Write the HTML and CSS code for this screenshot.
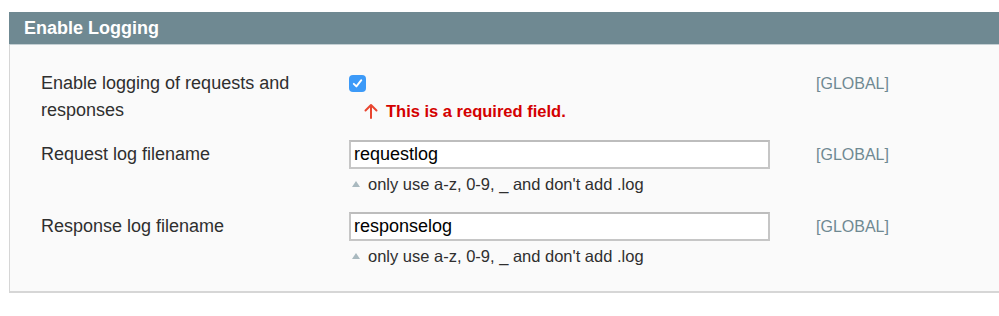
FILE: index.html
```html
<!doctype html>
<html lang="en">

<head>
    <meta charset="utf-8">
    <title>Enable Logging</title>
    <link rel="stylesheet" href="styles.css">
</head>

<body>
<div id="section">
    <div class="section-head">Enable Logging</div>
    <div class="fieldset">
        <div class="row row-first">
            <div class="label label-wrap">Enable logging of requests and responses</div>
            <div class="value">
                <span class="checkbox">
                    <svg width="11" height="11" viewBox="0 0 11 11"><path d="M1.8 5.8 L4.4 8.4 L9.3 2.2" fill="none" stroke="#fff" stroke-width="1.9" stroke-linecap="round" stroke-linejoin="round"/></svg>
                </span>
                <div class="required">
                    <svg class="arrow" width="14" height="16" viewBox="0 0 14 16"><path d="M7 15 V2 M1.5 7.5 L7 2 L12.5 7.5" fill="none" stroke="#e8452f" stroke-width="2" stroke-linecap="round" stroke-linejoin="round"/></svg>
                    This is a required field.
                </div>
            </div>
            <div class="scope">[GLOBAL]</div>
        </div>
        <div class="row">
            <div class="label label-input">Request log filename</div>
            <div class="value">
                <input class="input" type="text" value="requestlog">
                <div class="note">only use a-z, 0-9, _ and don't add .log</div>
            </div>
            <div class="scope scope-input">[GLOBAL]</div>
        </div>
        <div class="row">
            <div class="label label-input">Response log filename</div>
            <div class="value">
                <input class="input" type="text" value="responselog">
                <div class="note">only use a-z, 0-9, _ and don't add .log</div>
            </div>
            <div class="scope scope-input">[GLOBAL]</div>
        </div>
    </div>
</div>
</body>

</html>
```

FILE: styles.css
```css
body {
    margin: 0;
    font-family: "Liberation Sans", Arial, sans-serif;
    color: #2f2f2f;
    background: #ffffff;
}

#section {
    padding: 12px 0 0 9px;
}

.section-head {
    height: 33px;
    line-height: 33px;
    background: #6f8992;
    color: #ffffff;
    font-size: 18px;
    font-weight: bold;
    padding-left: 15px;
    border-bottom: 1px solid #c4cfd3;
    box-sizing: border-box;
}

.fieldset {
    background: #fafafa;
    border-left: 1px solid #d6d6d6;
    border-bottom: 2px solid #d6d6d6;
    padding: 25px 0 25px 31px;
}

.row {
    display: grid;
    grid-template-columns: 262px 421px auto;
    column-gap: 46px;
    align-items: start;
    margin-bottom: 18px;
}

.row-first {
    margin-bottom: 16px;
}

.row:last-child {
    margin-bottom: 0;
}

.label {
    font-size: 18px;
}

.label-wrap {
    line-height: 27px;
    width: 270px;
}

.label-input {
    line-height: 29px;
}

.checkbox {
    display: flex;
    align-items: center;
    justify-content: center;
    width: 17px;
    height: 17px;
    margin-top: 5px;
    border-radius: 4px;
    background: #3c9af8;
}

.required {
    display: flex;
    align-items: center;
    gap: 8px;
    margin-top: 9px;
    padding-left: 15px;
    line-height: 20px;
    font-size: 16.5px;
    font-weight: bold;
    color: #d40000;
}

.arrow {
    display: block;
}

.input {
    display: block;
    width: 100%;
    height: 29px;
    box-sizing: border-box;
    margin: 0;
    padding: 0 3px;
    border: 2px solid #c6c6c6;
    border-top-color: #bdbdbd;
    background: #ffffff;
    font-family: "Liberation Sans", Arial, sans-serif;
    font-size: 18px;
    color: #000000;
    outline: none;
}

.note {
    margin-top: 5px;
    line-height: 20px;
    font-size: 16.5px;
    color: #2f2f2f;
    padding-left: 19px;
    position: relative;
}

.note:before {
    content: "";
    position: absolute;
    left: 3px;
    top: 7px;
    border-left: 4px solid transparent;
    border-right: 4px solid transparent;
    border-bottom: 6px solid #a9b9bf;
}

.scope {
    font-size: 16px;
    line-height: 27px;
    color: #6f8992;
}

.scope-input {
    line-height: 29px;
}
```
